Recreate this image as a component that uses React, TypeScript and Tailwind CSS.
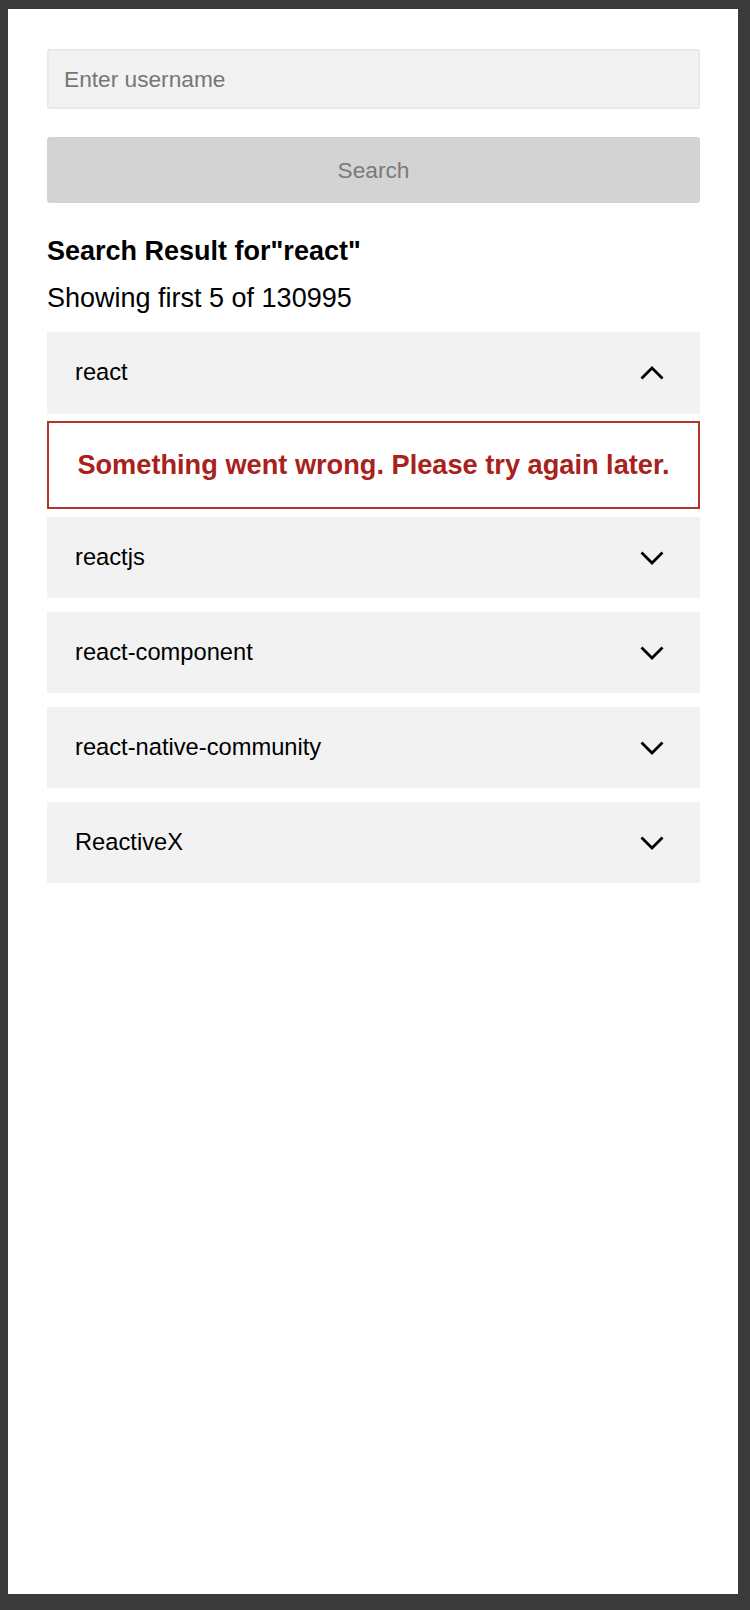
import { useState } from "react";

const repos = ["react", "reactjs", "react-component", "react-native-community", "ReactiveX"];

function Chevron({ up }: { up: boolean }) {
  return (
    <svg width="24" height="14" viewBox="0 0 24 14" fill="none" className="shrink-0">
      <polyline
        points={up ? "1.5,12.5 12,2 22.5,12.5" : "1.5,1.5 12,12 22.5,1.5"}
        stroke="#000"
        strokeWidth="2.8"
        strokeLinejoin="miter"
      />
    </svg>
  );
}

export default function App() {
  const [username, setUsername] = useState("");
  const [open, setOpen] = useState<number | null>(0);

  return (
    <div className="min-h-[1610px] bg-[#3a3a3a] pl-[8px] pt-[9px] pb-[16px] font-['Liberation_Sans',Arial,sans-serif]">
      <div className="flex h-[1585px] w-[730px] flex-col bg-white pl-[39px] pr-[38px] pt-[40px]">
        <input
          value={username}
          onChange={(e) => setUsername(e.target.value)}
          placeholder="Enter username"
          className="h-[60px] w-full rounded-[2px] border-2 border-[#e9e9e9] bg-[#f2f2f2] px-[15px] text-[22.7px] text-black outline-none placeholder:text-[#767676]"
        />
        <button
          type="button"
          disabled={!username}
          className="mt-[28px] h-[66px] w-full rounded-[3px] bg-[#d3d3d3] text-[22.7px] text-[#7a7a7a]"
        >
          Search
        </button>

        <h2 className="mt-[33px] text-[27px] font-bold leading-[31px] text-black">Search Result for"react"</h2>
        <p className="mt-[16px] text-[27px] leading-[31px] text-black">Showing first 5 of 130995</p>

        <div className="mt-[18px] flex flex-col">
          {repos.map((name, i) => {
            const isOpen = open === i;
            return (
              <div key={name} className={i === 0 ? "" : "mt-[14px]"}>
                <button
                  type="button"
                  onClick={() => setOpen(isOpen ? null : i)}
                  className={
                    "flex w-full items-center justify-between bg-[#f2f2f2] pl-[28px] pr-[36px] text-left text-[23.7px] text-black " +
                    (i === 0 ? "h-[82px]" : "h-[81px]")
                  }
                >
                  <span>{name}</span>
                  <Chevron up={isOpen} />
                </button>
                {isOpen && (
                  <div className="mt-[7px] mb-[-6px] flex h-[88px] items-center justify-center border-2 border-[#b3342c] text-[27.2px] font-bold text-[#a8211b]">
                    Something went wrong. Please try again later.
                  </div>
                )}
              </div>
            );
          })}
        </div>
      </div>
    </div>
  );
}
